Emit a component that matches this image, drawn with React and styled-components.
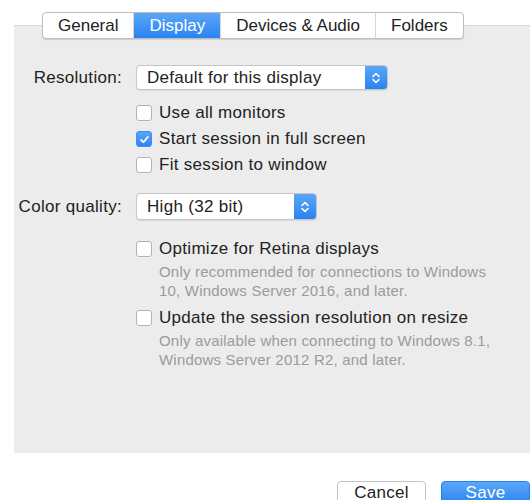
import styled, { createGlobalStyle } from "styled-components";

const GlobalStyle = createGlobalStyle`
  html, body {
    margin: 0;
    padding: 0;
    background: #ffffff;
  }
  body {
    font-family: "Liberation Sans", Arial, sans-serif;
    color: #222;
    overflow: hidden;
  }
`;

const Window = styled.div`
  width: 530px;
  padding-top: 12px;
`;

const TabBar = styled.div`
  display: flex;
  margin-left: 42px;
  margin-bottom: -14px;
  position: relative;
  z-index: 1;
  width: fit-content;
  border: 1px solid #bdbdbd;
  border-radius: 4px;
  background: #fff;
  box-shadow: 0 1px 1px rgba(0, 0, 0, 0.12);
  overflow: hidden;
`;

const Tab = styled.div`
  height: 25px;
  line-height: 25px;
  padding: 0 15px;
  font-size: 17px;
  color: ${(p) => (p.active ? "#fff" : "#222")};
  background: ${(p) =>
    p.active ? "linear-gradient(#5aa7f8, #2a83f0)" : "transparent"};
  border-left: ${(p) => (p.first ? "none" : "1px solid #d6d6d6")};
`;

const Panel = styled.div`
  margin-left: 14px;
  height: 428px;
  background: #ececec;
  border-top: 1px solid #d9d9d9;
  padding-top: 39px;
  box-sizing: border-box;
`;

const FieldRow = styled.div`
  display: flex;
  align-items: center;
  margin-top: ${(p) => p.top || 0}px;
`;

const Label = styled.div`
  width: ${(p) => p.width}px;
  text-align: right;
  font-size: 17px;
  letter-spacing: 0.3px;
  color: #222;
  margin-right: 14px;
  flex-shrink: 0;
`;

const Select = styled.div`
  display: flex;
  width: ${(p) => p.width}px;
  height: ${(p) => p.height}px;
  box-sizing: border-box;
  background: #fff;
  border: 1px solid #c6c6c6;
  border-radius: 4px;
  box-shadow: 0 1px 1px rgba(0, 0, 0, 0.08);
  overflow: hidden;
`;

const SelectValue = styled.div`
  flex: 1;
  padding-left: 10px;
  font-size: 17px;
  letter-spacing: 0.3px;
  display: flex;
  align-items: center;
  color: #222;
`;

const Stepper = styled.div`
  width: 22px;
  display: flex;
  align-items: center;
  justify-content: center;
  background: linear-gradient(#5aa7f8, #2a83f0);
`;

const Options = styled.div`
  margin-left: ${(p) => p.left}px;
  margin-top: ${(p) => p.top || 0}px;
`;

const CheckRow = styled.div`
  display: flex;
  align-items: center;
  height: 26px;
  margin-top: ${(p) => p.top || 0}px;
`;

const Box = styled.div`
  width: 16px;
  height: 16px;
  box-sizing: border-box;
  border-radius: 3px;
  border: 1px solid ${(p) => (p.checked ? "#3c8cf2" : "#b3b3b3")};
  background: ${(p) =>
    p.checked ? "linear-gradient(#5aa7f8, #2f86f1)" : "#fff"};
  display: flex;
  align-items: center;
  justify-content: center;
  margin-right: 7px;
`;

const CheckText = styled.span`
  font-size: 17px;
  letter-spacing: 0.3px;
  color: #222;
`;

const Hint = styled.div`
  margin-left: 23px;
  font-size: 15px;
  letter-spacing: 0.2px;
  line-height: 19px;
  color: #9b9b9b;
`;

const Footer = styled.div`
  display: flex;
  justify-content: flex-end;
  gap: 15px;
  margin-top: 28px;
`;

const Button = styled.div`
  width: 89px;
  height: 24px;
  box-sizing: border-box;
  border-radius: 4px;
  font-size: 17px;
  letter-spacing: 0.3px;
  display: flex;
  align-items: center;
  justify-content: center;
  color: ${(p) => (p.primary ? "#fff" : "#222")};
  background: ${(p) =>
    p.primary ? "linear-gradient(#5aa7f8, #2a83f0)" : "#fff"};
  border: 1px solid ${(p) => (p.primary ? "#2a7fe8" : "#c4c4c4")};
  box-shadow: 0 1px 1px rgba(0, 0, 0, 0.1);
`;

function Chevrons() {
  return (
    <svg width="10" height="14" viewBox="0 0 10 14">
      <path
        d="M2 5.5 L5 2.5 L8 5.5 M2 8.5 L5 11.5 L8 8.5"
        fill="none"
        stroke="#fff"
        strokeWidth="1.6"
        strokeLinecap="round"
        strokeLinejoin="round"
      />
    </svg>
  );
}

function Check({ checked, children, top }) {
  return (
    <CheckRow top={top}>
      <Box checked={checked}>
        {checked && (
          <svg width="11" height="11" viewBox="0 0 11 11">
            <path
              d="M2 5.8 L4.4 8.2 L9 2.8"
              fill="none"
              stroke="#fff"
              strokeWidth="1.7"
              strokeLinecap="round"
              strokeLinejoin="round"
            />
          </svg>
        )}
      </Box>
      <CheckText>{children}</CheckText>
    </CheckRow>
  );
}

function Dropdown({ value, width, height }) {
  return (
    <Select width={width} height={height}>
      <SelectValue>{value}</SelectValue>
      <Stepper>
        <Chevrons />
      </Stepper>
    </Select>
  );
}

export default function App() {
  return (
    <>
      <GlobalStyle />
      <Window>
        <TabBar>
          <Tab first>General</Tab>
          <Tab active>Display</Tab>
          <Tab>Devices &amp; Audio</Tab>
          <Tab>Folders</Tab>
        </TabBar>
        <Panel>
          <FieldRow>
            <Label width={108}>Resolution:</Label>
            <Dropdown value="Default for this display" width={252} height={25} />
          </FieldRow>
          <Options left={122} top={10}>
            <Check>Use all monitors</Check>
            <Check checked>Start session in full screen</Check>
            <Check>Fit session to window</Check>
          </Options>
          <FieldRow top={15}>
            <Label width={108}>Color quality:</Label>
            <Dropdown value="High (32 bit)" width={181} height={27} />
          </FieldRow>
          <Options left={122} top={16}>
            <Check>Optimize for Retina displays</Check>
            <Hint>
              Only recommended for connections to Windows
              <br />
              10, Windows Server 2016, and later.
            </Hint>
            <Check top={5}>Update the session resolution on resize</Check>
            <Hint>
              Only available when connecting to Windows 8.1,
              <br />
              Windows Server 2012 R2, and later.
            </Hint>
          </Options>
        </Panel>
        <Footer>
          <Button>Cancel</Button>
          <Button primary>Save</Button>
        </Footer>
      </Window>
    </>
  );
}
